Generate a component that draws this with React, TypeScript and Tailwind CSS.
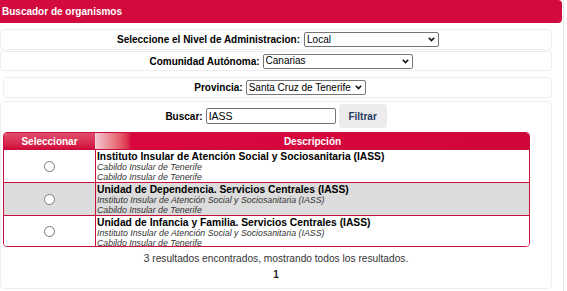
import React from "react";

type Organismo = {
  nombre: string;
  lineas: string[];
};

const organismos: Organismo[] = [
  {
    nombre: "Instituto Insular de Atención Social y Sociosanitaria (IASS)",
    lineas: ["Cabildo Insular de Tenerife", "Cabildo Insular de Tenerife"],
  },
  {
    nombre: "Unidad de Dependencia. Servicios Centrales (IASS)",
    lineas: [
      "Instituto Insular de Atención Social y Sociosanitaria (IASS)",
      "Cabildo Insular de Tenerife",
    ],
  },
  {
    nombre: "Unidad de Infancia y Familia. Servicios Centrales (IASS)",
    lineas: [
      "Instituto Insular de Atención Social y Sociosanitaria (IASS)",
      "Cabildo Insular de Tenerife",
    ],
  },
];

function Select({ value, width }: { value: string; width: string }) {
  return (
    <span className="relative inline-flex">
      <select
        defaultValue={value}
        className={`${width} h-[15px] appearance-none border border-[#767676] rounded-[2px] bg-white text-[10px] leading-none text-black pl-[2px] font-['Liberation_Sans',Arial,sans-serif]`}
      >
        <option>{value}</option>
      </select>
      <svg
        className="absolute right-[4px] top-[5px] pointer-events-none"
        width="7"
        height="5"
        viewBox="0 0 7 5"
      >
        <path d="M0.8 0.8 L3.5 3.6 L6.2 0.8" fill="none" stroke="#111" strokeWidth="1.6" />
      </svg>
    </span>
  );
}

export default function App() {
  return (
    <div className="relative w-[567px] h-[291px] overflow-hidden bg-white font-['Liberation_Sans',Arial,sans-serif] text-black">
      <div className="w-[562px] h-[23px] bg-[#d20a3e] rounded-r-[4px] flex items-center pl-[2px]">
        <span className="text-white font-bold text-[10px]">Buscador de organismos</span>
      </div>

      <div className="w-[552px] flex flex-col">
        <div className="mt-[6px] h-[21px] border border-[#eeeeee] rounded-[3px] flex items-center justify-center gap-[4px] pl-[4px]">
          <span className="font-bold text-[10px]">Seleccione el Nivel de Administracion:</span>
          <Select value="Local" width="w-[135px]" />
        </div>
        <div className="mt-[1px] h-[20px] border border-[#eeeeee] rounded-[3px] flex items-center justify-center gap-[3px] pl-[10px]">
          <span className="font-bold text-[10px]">Comunidad Autónoma:</span>
          <Select value="Canarias" width="w-[150px]" />
        </div>
        <div className="mt-[6px] ml-[3px] h-[21px] border border-[#eeeeee] rounded-[3px] flex items-center justify-center gap-[3px] pl-[5px]">
          <span className="font-bold text-[10px]">Provincia:</span>
          <Select value="Santa Cruz de Tenerife" width="w-[120px]" />
        </div>

        <div className="mt-[3px] h-[188px] border border-[#eeeeee] rounded-[4px] flex flex-col">
          <div className="mt-[2px] flex items-center justify-center gap-[3px]">
            <span className="font-bold text-[10px]">Buscar:</span>
            <input
              defaultValue="IASS"
              className="w-[130px] h-[16px] border border-[#767676] rounded-[2px] px-[2px] text-[10.5px] leading-none outline-none"
            />
            <button className="w-[48px] h-[24px] bg-[#ececec] rounded-[4px] text-[10px] font-bold text-[#243a5e]">
              Filtrar
            </button>
          </div>

          <div className="mt-[4px] ml-[2px] w-[527px] rounded-[4px] overflow-hidden border border-[#c8103e]">
            <div className="flex h-[16px]">
              <div className="w-[92px] bg-gradient-to-b from-[#e24a70] to-[#d2053b] text-white text-[10px] font-bold border-r border-[#f5d0da] flex items-center justify-center">
                Seleccionar
              </div>
              <div className="flex-1 bg-gradient-to-r from-[#f0c4cf] via-[#d8083f] via-[8%] to-[#d2053b] text-white text-[10px] font-bold flex items-center justify-center">
                Descripción
              </div>
            </div>
            {organismos.map((o, i) => (
              <div
                key={i}
                className={`flex border-t border-[#c8103e] ${i === 2 ? "h-[31px]" : "h-[33px]"} ${i === 1 ? "bg-[#dcdcdc]" : "bg-white"}`}
              >
                <div className="w-[92px] border-r border-[#c8103e] flex items-center justify-center">
                  <input type="radio" name="org" className="w-[11px] h-[11px] m-0" />
                </div>
                <div className="flex-1 pl-[1px]">
                  <div className="text-[10.3px] font-bold leading-[12px] mt-[1px]">{o.nombre}</div>
                  {o.lineas.map((l, j) => (
                    <div key={j} className="text-[8.8px] italic leading-[9.5px] text-[#333]">
                      {l}
                    </div>
                  ))}
                </div>
              </div>
            ))}
          </div>

          <div className="mt-[6px] text-center text-[10.2px] leading-[12px] text-[#333]">
            3 resultados encontrados, mostrando todos los resultados.
          </div>
          <div className="mt-[4px] text-center text-[10px] leading-[12px] font-bold text-[#222]">1</div>
        </div>
      </div>

      <div className="absolute top-0 right-[3px] w-[1px] h-[291px] bg-[#e6e6e6]" />
    </div>
  );
}
